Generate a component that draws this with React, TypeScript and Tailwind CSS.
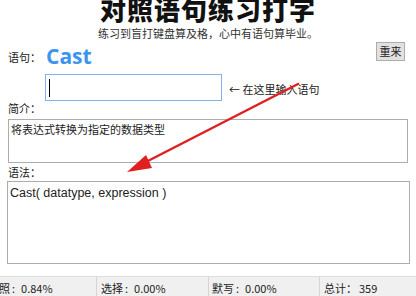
import React from 'react';

const cjk = { fontFamily: '"Noto Sans CJK SC", "Noto Sans", sans-serif' };

function StatusCell({ label, value, className }: { label: string; value: string; className?: string }) {
  return (
    <div className={`flex h-full items-start border-r border-[#d5d5d5] pt-[6px] text-[11px] leading-none text-[#222] ${className ?? ''}`}>
      <span>{label}</span>
      <span className="ml-[2px]">:</span>
      <span className="ml-[6px]">{value}</span>
    </div>
  );
}

export default function App() {
  return (
    <div className="relative flex h-[296px] w-[416px] flex-col overflow-hidden bg-white text-[#1a1a1a]" style={cjk}>
      <h1 className="mt-[-4px] text-center text-[26px] font-black leading-[26px] tracking-[1px] text-[#111]">
        对照语句练习打字
      </h1>
      <p className="mt-[5px] text-center text-[11px] leading-[13px] text-[#333]">
        练习到盲打键盘算及格，心中有语句算毕业。
      </p>

      <div className="mt-[3px] flex items-start px-[8px]">
        <span className="mt-[9px] text-[11px] leading-none">语句：</span>
        <span
          className="ml-[5px] text-[21px] font-bold leading-[26px] text-[#3d94ef]"
          style={{ fontFamily: '"Open Sans", "Noto Sans", sans-serif' }}
        >
          Cast
        </span>
        <button
          type="button"
          className="ml-auto mr-[3px] mt-[-1px] h-[19px] w-[29px] border border-[#adadad] bg-[#e1e1e1] text-[11px] leading-none text-[#222]"
        >
          重来
        </button>
      </div>

      <div className="mt-[5px] flex items-center pl-[45px]">
        <div className="flex h-[27px] w-[177px] items-center border border-[#7eb4ea] bg-white pl-[3px]">
          <div className="h-[18px] w-px bg-black" />
        </div>
        <span className="ml-[7px] mt-[3px] text-[11px] leading-none text-[#222]">← 在这里输入语句</span>
      </div>

      <span className="mt-[1px] px-[8px] text-[11px] leading-[12px]">简介：</span>
      <div className="mx-[8px] mt-[5px] h-[44px] border border-[#abadb3] px-[2px] pt-[2px] text-[11px] leading-[14px] text-[#222]">
        将表达式转换为指定的数据类型
      </div>

      <span className="mt-[3px] px-[8px] text-[11px] leading-[12px]">语法：</span>
      <div
        className="ml-[7px] mr-[6px] mt-[3px] h-[83px] border border-[#abadb3] px-[2px] pt-[4px] text-[12.5px] leading-[15px] text-[#222]"
        style={{ fontFamily: '"Liberation Sans", "Noto Sans", sans-serif' }}
      >
        Cast( datatype, expression )
      </div>

      <div className="mt-auto flex h-[20px] border-t border-[#dedede] bg-[#f0f0f0]">
        <StatusCell label="对照" value="0.84%" className="ml-[-12px] w-[109px] pl-[0px]" />
        <StatusCell label="选择" value="0.00%" className="w-[112px] pl-[4px]" />
        <StatusCell label="默写" value="0.00%" className="w-[111px] pl-[3px]" />
        <div className="flex items-start pl-[4px] pt-[6px] text-[11px] leading-none text-[#222]">
          <span>总计：</span>
          <span className="ml-[2px]">359</span>
        </div>
      </div>

      <svg className="pointer-events-none absolute left-0 top-0" width="416" height="296" viewBox="0 0 416 296">
        <line x1="298" y1="84" x2="142" y2="164" stroke="#e02020" strokeWidth="2.5" strokeLinecap="round" />
        <polygon points="127,172 146,155 152,168" fill="#e02020" />
      </svg>
    </div>
  );
}
